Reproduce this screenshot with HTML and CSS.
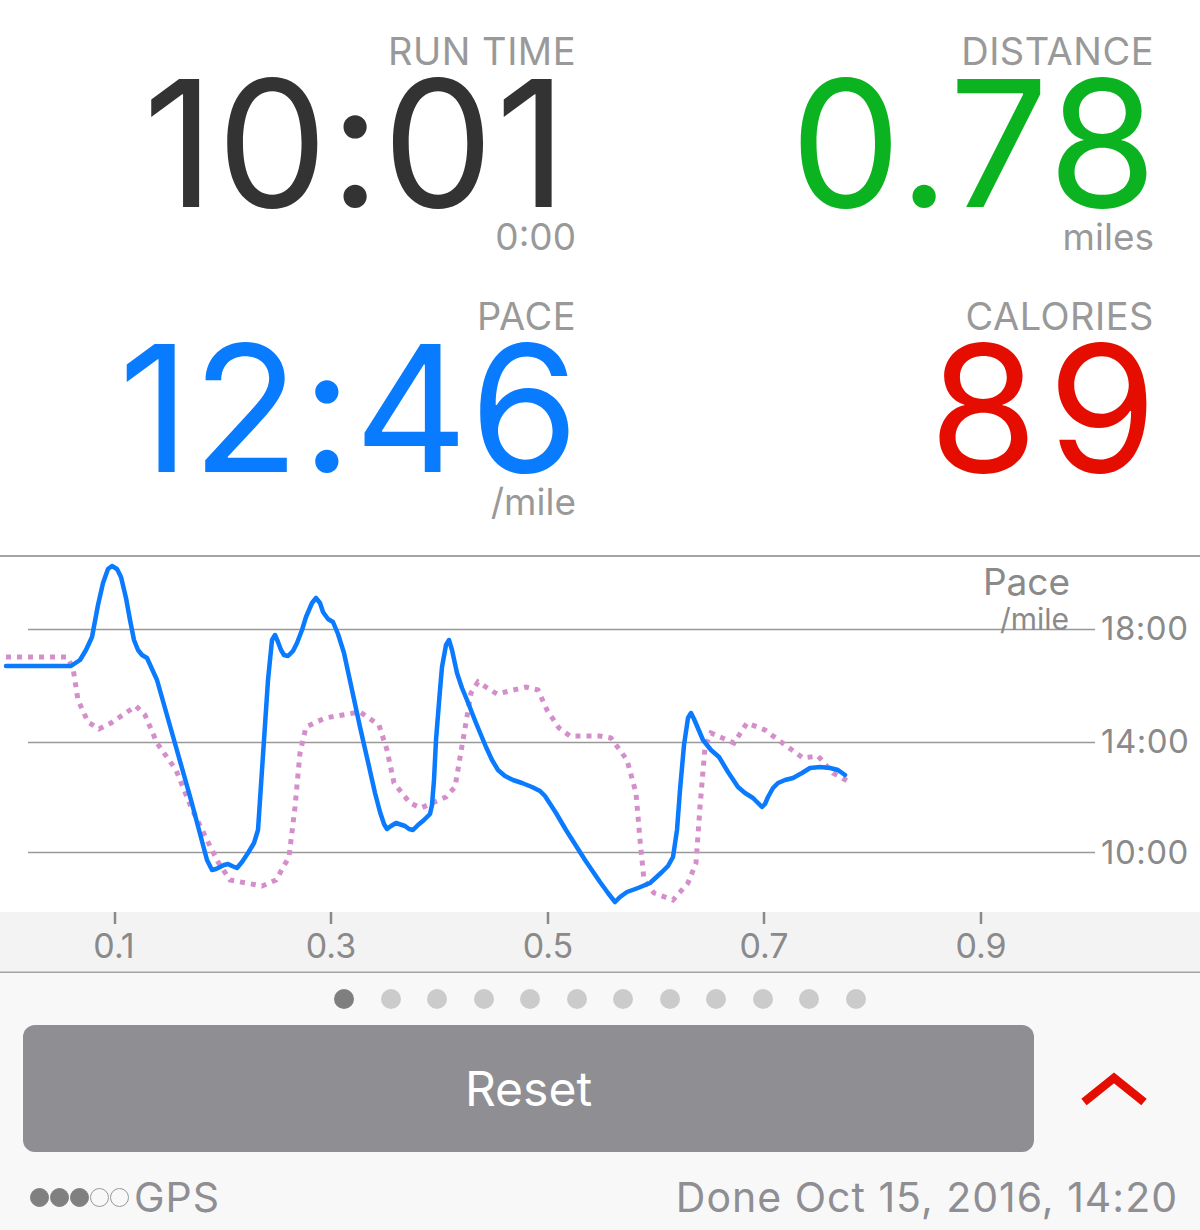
FILE: index.html
```html
<!DOCTYPE html>
<html>
  <head>
    <meta charset="UTF-8" />
    <title>Run Summary</title>
    <link rel="stylesheet" href="styles.css">
  </head>
  <body>
    <div class="stats">
      <div class="stat">
        <div class="label">RUN TIME</div>
        <div class="value time">10:01</div>
        <div class="unit">0:00</div>
      </div>
      <div class="stat">
        <div class="label">DISTANCE</div>
        <div class="value distance">0.78</div>
        <div class="unit">miles</div>
      </div>
      <div class="stat">
        <div class="label">PACE</div>
        <div class="value pace">12:46</div>
        <div class="unit">/mile</div>
      </div>
      <div class="stat">
        <div class="label">CALORIES</div>
        <div class="value calories">89</div>
      </div>
    </div>

    <div class="chart">
      <svg width="1200" height="418" viewBox="0 555 1200 418">
        <rect class="axis-band" x="0" y="912" width="1200" height="61" />
        <line class="frame" x1="0" y1="556" x2="1200" y2="556" />
        <line class="frame" x1="0" y1="972.5" x2="1200" y2="972.5" />

        <line class="grid" x1="28" y1="629.5" x2="1095" y2="629.5" />
        <line class="grid" x1="28" y1="742.5" x2="1095" y2="742.5" />
        <line class="grid" x1="28" y1="852.5" x2="1095" y2="852.5" />

        <text class="y-label" x="1101" y="640">18:00</text>
        <text class="y-label" x="1101" y="753">14:00</text>
        <text class="y-label" x="1101" y="864">10:00</text>

        <text class="axis-title" x="1070" y="595">Pace</text>
        <text class="axis-sub" x="1069" y="630">/mile</text>

        <line class="tick" x1="115" y1="912" x2="115" y2="924" />
        <line class="tick" x1="331" y1="912" x2="331" y2="924" />
        <line class="tick" x1="548" y1="912" x2="548" y2="924" />
        <line class="tick" x1="764" y1="912" x2="764" y2="924" />
        <line class="tick" x1="981" y1="912" x2="981" y2="924" />
        <text class="x-label" x="114" y="958">0.1</text>
        <text class="x-label" x="331" y="958">0.3</text>
        <text class="x-label" x="548" y="958">0.5</text>
        <text class="x-label" x="764" y="958">0.7</text>
        <text class="x-label" x="981" y="958">0.9</text>

        <!-- average pace (dotted) -->
        <polyline class="avg-line" points="6,657 67,657 73,668 78,700 88,722 99,729 111,723 136,706 145,715 157,743 176,770 191,807 207,840 218,862 230,880 262,886 276,880 289,857 295,807 300,753 306,727 325,718 360,712 379,725 387,750 394,783 410,803 421,808 446,797 455,787 463,740 471,693 478,682 497,694 526,687 538,690 547,710 559,728 570,736 600,736 611,738 627,760 636,793 640,840 644,880 654,893 673,900 688,883 696,863 700,807 705,747 711,733 734,743 747,723 765,730 788,747 803,758 818,756 833,773 851,783" />

        <!-- current pace -->
        <polyline class="pace-line" points="6,666 71,666 80,660 86,650 92,637 98,605 103,583 108,569 112,566 117,569 121,577 126,598 130,620 134,640 138,650 142,655 147,658 157,680 176,747 191,800 207,860 212,870 216,869 220,867 224,865 228,864 232,866 237,868 242,862 248,853 254,843 258,830 260,800 264,740 268,680 272,640 275,635 278,642 281,650 284,655 288,656 293,651 297,643 302,630 306,617 312,603 316,598 320,603 323,612 328,619 333,622 338,634 344,653 352,690 360,727 368,762 375,793 380,812 384,824 387,829 391,826 396,823 405,826 409,829 413,830 418,825 424,820 430,814 432,805 434,780 436,740 440,690 442,667 446,645 449,640 452,650 457,673 462,688 467,700 476,723 486,747 492,760 498,770 505,776 513,780 522,783 532,787 540,791 545,796 556,813 566,830 585,860 600,882 608,893 615,902 620,897 627,892 638,888 650,883 662,872 668,866 673,857 677,830 680,790 684,745 688,718 691,713 694,719 697,726 703,740 711,750 719,757 728,772 738,787 745,793 753,798 762,807 765,804 768,797 773,788 778,783 785,780 793,778 802,773 810,768 820,767 830,768 838,770 845,775" />
      </svg>
    </div>

    <div class="controls">
      <div class="pager">
        <span class="dot active"></span>
        <span class="dot"></span>
        <span class="dot"></span>
        <span class="dot"></span>
        <span class="dot"></span>
        <span class="dot"></span>
        <span class="dot"></span>
        <span class="dot"></span>
        <span class="dot"></span>
        <span class="dot"></span>
        <span class="dot"></span>
        <span class="dot"></span>
      </div>
      <div class="actions">
        <button class="reset" type="button">Reset</button>
        <div class="toggle">
          <svg width="66" height="36" viewBox="0 0 66 36">
            <polyline points="3,30 33,6 63,30" />
          </svg>
        </div>
      </div>
      <div class="status">
        <div class="gps">
          <span class="signal">
            <span class="bar on"></span>
            <span class="bar on"></span>
            <span class="bar on"></span>
            <span class="bar"></span>
            <span class="bar"></span>
          </span>
          GPS
        </div>
        <div class="done">Done Oct 15, 2016, 14:20</div>
      </div>
    </div>
  </body>
</html>
```

FILE: styles.css
```css
body {
  margin: 0;
  width: 1200px;
  background: #fff;
  font-family: Inter, "Helvetica Neue", Arial, sans-serif;
  color: #333;
}

/* top stats */
.stats {
  display: grid;
  grid-template-columns: 576px 578px;
  align-content: start;
  row-gap: 37px;
  height: 555px;
  box-sizing: border-box;
  padding: 31px 0 0;
}
.stat {
  text-align: right;
}
.label {
  font-size: 38px;
  line-height: 40px;
  color: #999;
  letter-spacing: 0.5px;
}
.value {
  font-size: 176px;
  line-height: 144px;
  letter-spacing: 2px;
  margin-right: -5px;
}
.time {
  color: #333;
  margin-right: 7px;
}
.distance {
  color: #0ab31f;
}
.pace {
  color: #087bff;
}
.calories {
  color: #e50d00;
  letter-spacing: 10px;
  margin-right: -13px;
}
.unit {
  font-size: 37px;
  line-height: 44px;
  color: #999;
}

/* chart */
.chart svg {
  display: block;
}
.axis-band {
  fill: #f3f3f3;
}
.frame {
  stroke: #a3a3a3;
  stroke-width: 2;
}
.grid {
  stroke: #999;
  stroke-width: 1.5;
}
.tick {
  stroke: #8a8a8a;
  stroke-width: 2.5;
}
.y-label,
.x-label,
.axis-title,
.axis-sub {
  font-family: Inter, Arial, sans-serif;
  fill: #8a8a8a;
}
.y-label {
  font-size: 33px;
  letter-spacing: 0.5px;
}
.x-label {
  font-size: 34px;
  text-anchor: middle;
}
.axis-title {
  font-size: 37px;
  text-anchor: end;
}
.axis-sub {
  font-size: 30px;
  text-anchor: end;
}
.pace-line {
  fill: none;
  stroke: #0a7aff;
  stroke-width: 4.5;
  stroke-linejoin: round;
  stroke-linecap: round;
}
.avg-line {
  fill: none;
  stroke: #d48fcb;
  stroke-width: 5;
  stroke-dasharray: 5 6;
}

/* bottom controls */
.controls {
  background: #f8f8f8;
  height: 257px;
  padding-top: 16px;
  box-sizing: border-box;
}
.pager {
  display: flex;
  justify-content: center;
  gap: 26.5px;
}
.dot {
  width: 20px;
  height: 20px;
  border-radius: 50%;
  background: #cbcbcb;
}
.dot.active {
  background: #7f7f7f;
}
.actions {
  display: flex;
  align-items: center;
  margin-top: 16px;
  padding-left: 23px;
}
.reset {
  width: 1011px;
  height: 127px;
  border: none;
  border-radius: 12px;
  background: #8e8e93;
  color: #fff;
  font-family: Inter, Arial, sans-serif;
  font-size: 48px;
}
.toggle {
  flex: 1;
  display: flex;
  justify-content: center;
  padding: 2px 6px 0 0;
}
.toggle polyline {
  fill: none;
  stroke: #e50d00;
  stroke-width: 8.5;
}
.status {
  display: flex;
  justify-content: space-between;
  align-items: center;
  padding: 20px 22px 0 29px;
  font-size: 41px;
  letter-spacing: 1px;
  color: #8e8e93;
}
.gps {
  display: flex;
  align-items: center;
  gap: 5px;
}
.signal {
  display: flex;
}
.bar {
  width: 19px;
  height: 19px;
  margin: 0 0.5px;
  border-radius: 50%;
  border: 1.5px solid #999;
  box-sizing: border-box;
}
.bar.on {
  background: #808080;
  border-color: #808080;
}
```
